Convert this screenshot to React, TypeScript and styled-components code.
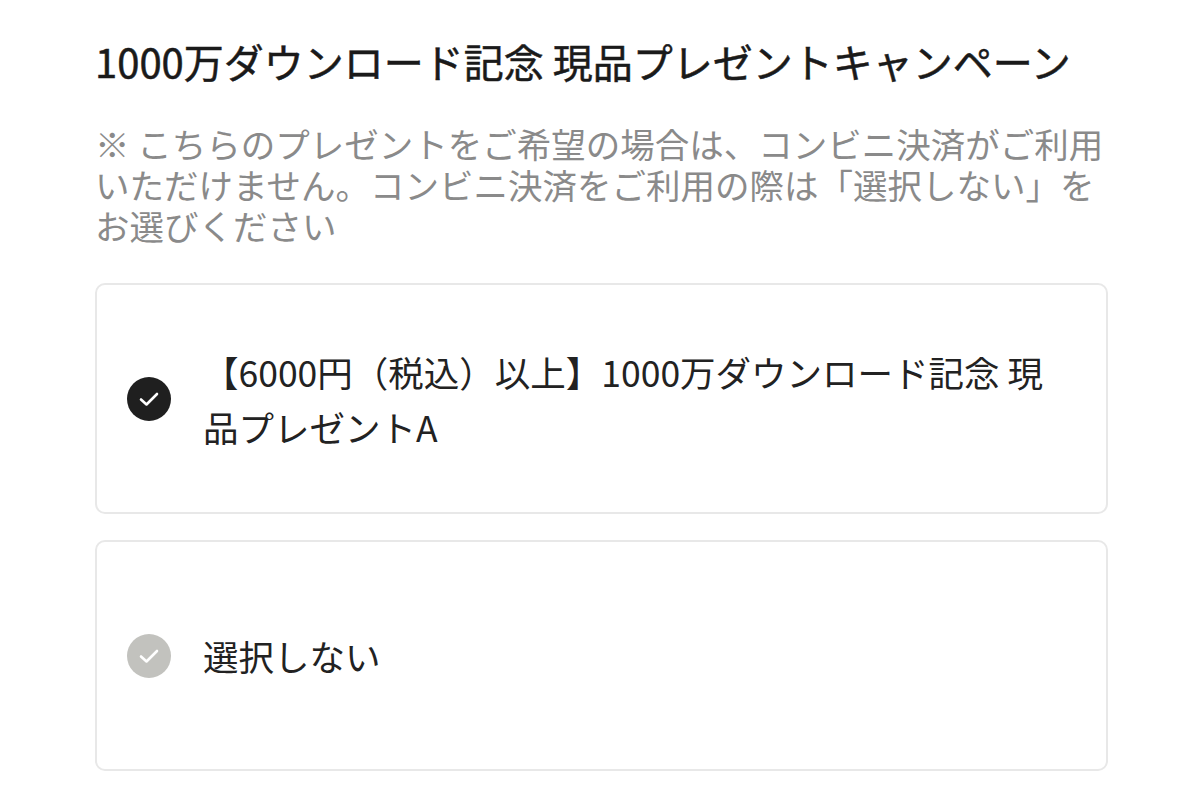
import React from 'react';
import styled, { createGlobalStyle } from 'styled-components';

const GlobalStyle = createGlobalStyle`
  html, body {
    margin: 0;
    padding: 0;
    background: #fff;
  }
  body {
    font-family: "Noto Sans CJK JP", "Noto Sans", sans-serif;
    color: #222;
  }
`;

const Page = styled.div`
  width: 1200px;
  height: 800px;
  box-sizing: border-box;
  padding: 33px 92px 0 95px;
  overflow: hidden;
`;

const Title = styled.h1`
  margin: 0;
  font-size: 40px;
  line-height: 56px;
  font-weight: 400;
  -webkit-text-stroke: 0.5px #1a1a1a;
  color: #1a1a1a;
  white-space: nowrap;
`;

const Note = styled.p`
  margin: 34px 0 0;
  font-size: 34.5px;
  line-height: 41px;
  color: #8a8a8a;
  white-space: nowrap;
`;

const Options = styled.div`
  margin-top: 37px;
  display: flex;
  flex-direction: column;
  gap: 26px;
`;

const Card = styled.div`
  min-height: 231px;
  box-sizing: border-box;
  border: 2px solid #e8e8e8;
  border-radius: 10px;
  display: flex;
  align-items: center;
  padding: 0 32px 0 30px;
  gap: 32px;
`;

const Check = styled.span<{ $on: boolean }>`
  flex: none;
  width: 44px;
  height: 44px;
  border-radius: 50%;
  background: ${(p) => (p.$on ? '#1f1f1f' : '#c2c2be')};
  display: flex;
  align-items: center;
  justify-content: center;
`;

const Label = styled.span`
  font-size: 35.5px;
  line-height: 55px;
  color: #222;
  max-width: 860px;
`;

const CheckMark = () => (
  <svg width="44" height="44" viewBox="0 0 44 44">
    <path
      d="M14 22.5 L19.5 27.5 L30 17"
      fill="none"
      stroke="#fff"
      strokeWidth="2.6"
      strokeLinecap="round"
      strokeLinejoin="round"
    />
  </svg>
);

const options = [
  { label: '【6000円（税込）以上】1000万ダウンロード記念 現品プレゼントA', on: true },
  { label: '選択しない', on: false },
];

const App = () => {
  return (
    <Page>
      <GlobalStyle />
      <Title>1000万ダウンロード記念 現品プレゼントキャンペーン</Title>
      <Note>
        ※ こちらのプレゼントをご希望の場合は、コンビニ決済がご利用
        <br />
        いただけません。コンビニ決済をご利用の際は「選択しない」を
        <br />
        お選びください
      </Note>
      <Options>
        {options.map((o) => (
          <Card key={o.label}>
            <Check $on={o.on}>
              <CheckMark />
            </Check>
            <Label>{o.label}</Label>
          </Card>
        ))}
      </Options>
    </Page>
  );
};

export default App;
